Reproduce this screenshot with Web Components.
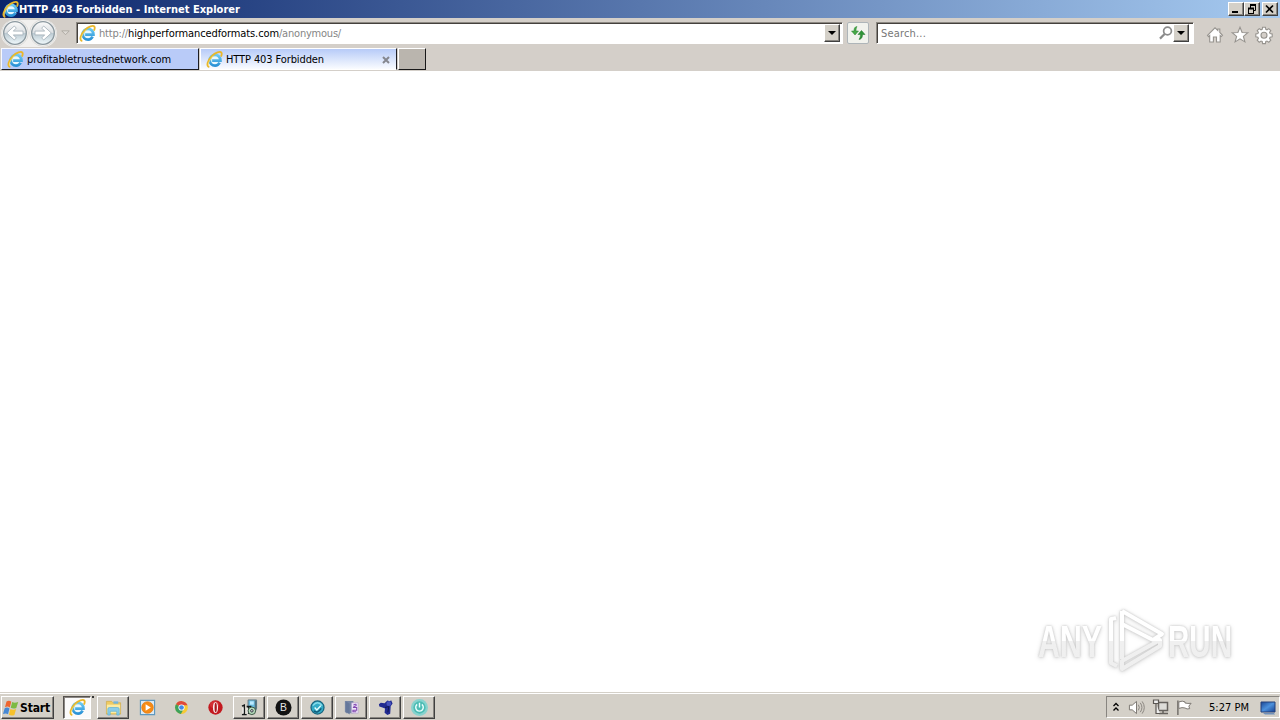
<!DOCTYPE html>
<html lang="en"><head><meta charset="utf-8"><title>HTTP 403 Forbidden - Internet Explorer</title>
<style>html,body{margin:0;height:100%;overflow:hidden;background:#fff}</style></head>
<body><desktop-screen></desktop-screen>
<script>
const ICONS={
ie:['0 0 18 18',`<defs><linearGradient id="a" x2="0" y2="1"><stop stop-color="#6ccaf2"/><stop offset="1" stop-color="#2b92d6"/></linearGradient></defs><circle cx="9.600" cy="9.600" r="6.200" fill="#e9f7fd"/><path d="M14.400 12.400C13.300 14.600 11.600 15.500 9.600 15.500 6.300 15.500 4 13 4 9.800 4 6.600 6.300 4.100 9.600 4.100s5.800 2.600 5.700 6.200H6.500" fill="none" stroke="url(#a)" stroke-width="2.900"/><path d="M3.500 17C-.2 16.300 1.600 9.900 5.900 5.600 10 1.600 15 .1 16.300 1.700c.7.900.3 2.600-.5 4.200" fill="none" stroke="#eab72a" stroke-width="1.900"/><path d="M2.800 15.500C1.800 13 4.500 8.500 8 5" fill="none" stroke="#ffe577" stroke-width=".8"/>`],
back:['0 0 28 28',`<defs><linearGradient id="a" x2="0" y2="1"><stop stop-color="#fbfbfb"/><stop offset=".48" stop-color="#dce0e3"/><stop offset=".52" stop-color="#bccbd3"/><stop offset="1" stop-color="#f0f9fc"/></linearGradient></defs><circle cx="14" cy="14" r="13.300" fill="#f5f5f3" stroke="#dddcda"/><circle cx="14" cy="14" r="11.300" fill="url(#a)" stroke="#8b989f" stroke-width="1.300"/><path d="M5.700 14l7.600-7 2 2.100-3 3H22v3.800h-9.700l3 3-2 2.100z" fill="#fff" stroke="#a2afb7" stroke-width=".8"/>`],
tri:['0 0 10 7',`<path d="M.8 1h8.400L5 5.500z" fill="#dedbd6" stroke="#aaa69f"/>`],
down:['0 0 8 4',`<path d="M0 0h8L4 4z" fill="#000"/>`],
refresh:['0 0 18 16',`<path d="M8 1.500C5.500 1.800 5 3.500 5 6H2.500L6 10l3.500-4H7c0-2 .3-3 1-4.500z" fill="#46a747" stroke="#27852e" stroke-width=".5"/><path d="M10 14.500c2.500-.3 3.500-2 3.500-5H16l-3.500-4L9 9.500h2.500c0 2-.5 3.500-1.500 5z" fill="#2f9438" stroke="#187323" stroke-width=".5"/>`],
search:['0 0 14 14',`<circle cx="8.500" cy="5" r="3.900" fill="#fff" stroke="#8b8b8b" stroke-width="1.700"/><path d="M5.600 8L1 12.600" stroke="#8b8b8b" stroke-width="2.200"/>`],
home:['0 0 18 18',`<path d="M1.500 9.300L9 1.800l2.800 2.700V3h2v3.500l2.700 2.800-1.200 1.300-1.100-1V16h-3.700v-5H7.400v5H3.700V9.600l-1.100 1z" fill="#fff" stroke="#96938e" stroke-width="1.100"/>`],
star:['0 0 18 18',`<path d="M9 1.300l2.100 5.200 5.700.3-4.400 3.600 1.500 5.500L9 12.800l-4.900 3.100 1.500-5.500-4.400-3.600 5.700-.3z" fill="#fff" stroke="#96938e" stroke-width="1.100"/>`],
gear:['0 0 18 18',`<g fill="#fff" stroke="#96938e" stroke-width="1.100"><path d="M7.600 1.200h2.800l.4 2.100 1.200.5 1.800-1.200 2 2-1.200 1.800.5 1.200 2.100.4v2.800l-2.100.4-.5 1.200 1.200 1.800-2 2-1.800-1.200-1.200.5-.4 2.100H7.600l-.4-2.100-1.200-.5-1.800 1.200-2-2 1.200-1.800-.5-1.200L.8 10.800V8l2.100-.4.5-1.200-1.200-1.800 2-2L6 3.800l1.200-.5z"/><circle cx="9" cy="9.300" r="3" fill="#d4cfc9"/></g>`],
min:['0 0 12 10',`<path d="M2 7h6v2H2z"/>`],
restore:['0 0 12 10',`<path d="M4.500 1v3M4 1h6M9.500 1v5.500M7.500 6.500h2M2.500 4v5.500M7.500 4v5.500M2 9.500h6" fill="none" stroke="#000"/><path d="M4 1h6M2 4.500h6" stroke="#000" stroke-width="2"/>`],
close:['0 0 12 10',`<path d="M2 1.500l7 7M9 1.500l-7 7" stroke="#000" stroke-width="1.700"/>`],
x:['0 0 8 8',`<path d="M1 1l6 6M7 1L1 7" stroke="#85878f" stroke-width="2"/>`],
win:['0 0 17 16',`<path d="M3.500 1.500C5.500.3 7 .8 8.300 1.700L6.800 7.500C5.500 6.600 4 6.200 2 7.200z" fill="#ee6630"/><path d="M9.200 2.100c1.700 1 3.500.9 6 0L13.300 8c-2 .9-4 .8-5.600-.2z" fill="#7dba43"/><path d="M1.700 8.200c2-1 3.500-.6 4.800.3L5 14.300C3.700 13.400 2.200 13 0 14z" fill="#4688d4"/><path d="M7.400 8.900c1.600 1 3.500 1.100 5.700.2l-1.700 5.800c-2 .9-3.900.8-5.500-.2z" fill="#f6c12c"/>`],
folder:['0 0 18 18',`<path d="M1.500 4V2.500H7L8.500 4h8v12h-15z" fill="#f0cb61" stroke="#cda946" stroke-width=".7"/><path d="M2 6h14v9H2z" fill="#fceba3"/><path d="M9 2.500h5V5H9z" fill="#73b5db"/><path d="M3 17v-6.500Q3 9 5 9h8q2 0 2 1.500V17h-2.500v-4h-7v4z" fill="#8bcde9" stroke="#5aaed3" stroke-width=".7"/>`],
play:['0 0 18 18',`<path d="M1.500 1.500h15v15h-15z" fill="#dceaf3" stroke="#5d98bf" stroke-width="1.200"/><circle cx="9" cy="9" r="6.200" fill="#f58b16" stroke="#dc710b" stroke-width=".6"/><path d="M7 5.500v7L12.500 9z" fill="#fff"/>`],
chrome:['0 0 16 16',`<circle cx="8" cy="8" r="6.800" fill="#f6ca36"/><path d="M8 8L2.100 4.600A6.800 6.800 0 0 1 14.400 5.700H8z" fill="#df493b"/><path d="M8 8L2.100 4.600A6.800 6.800 0 0 0 7.300 14.800l3.100-5.200z" fill="#3da15b"/><circle cx="8" cy="8" r="3.300" fill="#fff"/><circle cx="8" cy="8" r="2.500" fill="#4389e5"/>`],
opera:['0 0 18 18',`<circle cx="9" cy="9" r="7.600" fill="#c3191f"/><ellipse cx="8" cy="6" rx="5" ry="4" fill="#ec5152" opacity=".4"/><ellipse cx="9" cy="9" rx="2.700" ry="5.900" fill="#f9eeee"/><ellipse cx="9.200" cy="9" rx="1.200" ry="5" fill="#a8191d"/>`],
installer:['0 0 18 18',`<path d="M7.500 1h9v9h-9z" fill="#68bce0" stroke="#607580"/><path d="M9.500 2.500h4v3.500h-4z" fill="#bceaff"/><path d="M14.500 1v11h2V2z" fill="#506f7b"/><path d="M1 7.500l2.500-1V16M1 16.500h5M6 8h5M8 8v8" fill="none" stroke="#15191a" stroke-width="1.500"/><path d="M2.200 9v6M6.500 9.500v6" stroke="#fff"/><circle cx="11.500" cy="12.500" r="4" fill="#b8ddbd" stroke="#344f3e"/><circle cx="11.500" cy="12.500" r="1.300" fill="#fff" stroke="#223"/>`],
b:['0 0 18 18',`<circle cx="9" cy="9" r="8.500" fill="#121212"/><text x="9" y="12.900" text-anchor="middle" font-family="Liberation Sans,sans-serif" font-size="11" fill="#e5e5e5">B</text>`],
check:['0 0 18 18',`<circle cx="9" cy="9" r="6.900" fill="#33abc6" stroke="#17647e" stroke-width="1.300"/><path d="M4 7q5-6 10 0" fill="none" stroke="#86dceb" stroke-width="1.500"/><path d="M6 9l2.300 2.500L12.500 7" fill="none" stroke="#e6ffff" stroke-width="1.500"/><path d="M5 12.500q4 3.500 8-2.500" fill="none" stroke="#125876" stroke-width="1.500"/>`],
book:['0 0 18 18',`<path d="M2 2h9v13H3.500L2 13.500z" fill="#7787a5"/><path d="M3 2.500v10.500l4 3.500V5z" fill="#65789b"/><path d="M9 4h7v11H9z" fill="#eee6f7" stroke="#b19bc9" stroke-width=".6"/><path d="M11 6.500q3-2 3 0c0 1.500-3 1-3 2.500h3.500v3h-4v1.500H14" fill="none" stroke="#8147b0" stroke-width="1.100"/>`],
scope:['0 0 18 18',`<path d="M2 5.500L4 4l4 .5 3-3 2.500.8 1.500-1 1.500 3.500-2 3-.5 7.700-3 1.500-3-2.500.5-4.500L5 8.800 2.500 8z" fill="#202a91"/><circle cx="12.500" cy="5" r="2.500" fill="#4653bd"/><path d="M8.500 9l4-1-1 6" fill="none" stroke="#10164f"/>`],
power:['0 0 18 18',`<circle cx="9" cy="9" r="9" fill="#87d3ce"/><circle cx="9" cy="9" r="6.500" fill="#4dbcb4"/><path d="M6.500 5.700a4 4 0 1 0 5 0M9 4v5" fill="none" stroke="#ecffff" stroke-width="1.500"/>`],
chev:['0 0 6 10',`<path d="M.5 4L3 1.500 5.500 4M.5 8.500L3 6l2.500 2.500" fill="none" stroke="#000" stroke-width="1.300"/>`],
sound:['0 0 18 16',`<path d="M1.500 5.500h3L9 1.500v13l-4.500-4h-3z" fill="#fff" stroke="#77736e"/><path d="M11 5q2 3 0 6M13 3q3.500 5 0 10M15 1.500q4.500 6.500 0 13" fill="none" stroke="#85817c"/>`],
net:['0 0 18 18',`<path d="M6.500 4.500h9v8h-9z" fill="#deddd9" stroke="#66625e" stroke-width="1.500"/><path d="M7 15.500h9M11 13v2" stroke="#66625e" stroke-width="1.500"/><path d="M1.500 2v3.500h5V2zM4 5.500v10h4" fill="#eee" stroke="#5b5753" stroke-width="1.200"/>`],
flag:['0 0 18 16',`<path d="M2 .5V16" stroke="#68645f" stroke-width="1.400"/><path d="M3 2q4-1.500 6.500 0v1.200q3 .8 6.500.3l-2.400 3 .9 2.700q-3 1-5-.7-3-1-6.500.5z" fill="#fff" stroke="#77736e"/>`],
desk:['0 0 18 18',`<defs><linearGradient id="a" x2="1" y2="1"><stop stop-color="#194694"/><stop offset=".5" stop-color="#4c91dc"/><stop offset="1" stop-color="#163f91"/></linearGradient></defs><path d="M2 3h14v10H2z" fill="url(#a)" stroke="#24417b"/><path d="M4 14h11l1 1.500H6z" fill="#6f90b9"/>`]
};
class UiIcon extends HTMLElement{connectedCallback(){const i=ICONS[this.getAttribute('name')],w=this.getAttribute('w')||16,h=this.getAttribute('h')||w;
this.attachShadow({mode:'open'}).innerHTML=`<style>:host{display:block;flex:none;width:${w}px;height:${h}px}svg{display:block;width:100%;height:100%;overflow:visible}</style><svg viewBox="${i[0]}" preserveAspectRatio="none">${i[1]}</svg>`}}
customElements.define('ui-icon',UiIcon);
class FitText extends HTMLElement{connectedCallback(){const s=this.attachShadow({mode:'open'}),w=+this.getAttribute('w');
s.innerHTML=`<style>:host{display:block;flex:none;width:${w}px;height:14px;line-height:14px;white-space:pre}span{display:inline-block;white-space:pre}</style><span><slot></slot></span>`;
const e=s.querySelector('span');e.style.letterSpacing=(w-e.getBoundingClientRect().width)/this.textContent.length+'px'}}
customElements.define('fit-text',FitText);
class RaisedButton extends HTMLElement{connectedCallback(){const a=n=>this.getAttribute(n);
this.attachShadow({mode:'open'}).innerHTML=`<style>:host{box-sizing:border-box;display:flex;flex:none;align-items:center;justify-content:center;width:${a('w')}px;height:${a('h')}px;background:#d4d0c8;border:1px solid;border-color:#fff #404040 #404040 #fff;box-shadow:inset -1px -1px #888580}:host([pressed]){background:#fbfafa;border-color:#55514d #fff #fff #55514d;box-shadow:inset 1px 1px #8b8783}:host([flat]){background:none;border-color:transparent;box-shadow:none}</style><slot></slot>`}}
customElements.define('raised-button',RaisedButton);
class TitleBar extends HTMLElement{connectedCallback(){this.attachShadow({mode:'open'}).innerHTML=`<style>:host{display:flex;box-sizing:border-box;height:18px;padding:0 2px 0 2px;align-items:center;background:linear-gradient(90deg,#0a246a,#a6caf0);color:#fff;font-weight:bold}fit-text{margin:1px 0 0 0}.g{flex:1}raised-button+raised-button+raised-button{margin-left:2px}</style><ui-icon name="ie" w="17"></ui-icon><fit-text w="221">HTTP 403 Forbidden - Internet Explorer</fit-text><span class="g"></span><raised-button w="16" h="14"><ui-icon name="min" w="12" h="10"></ui-icon></raised-button><raised-button w="16" h="14"><ui-icon name="restore" w="12" h="10"></ui-icon></raised-button><raised-button w="16" h="14"><ui-icon name="close" w="12" h="10"></ui-icon></raised-button>`}}
customElements.define('title-bar',TitleBar);
class NavBar extends HTMLElement{connectedCallback(){this.attachShadow({mode:'open'}).innerHTML=`<style>:host{display:flex;box-sizing:border-box;height:30px;align-items:center;padding:0 6px 0 1px;background:#d4cfc9}
.f{box-sizing:border-box;display:flex;height:22px;align-items:center;background:#fff;border:1px solid;border-color:#8c8882 #fff #fff #8c8882;box-shadow:inset 1px 1px #45413d}.url{width:767px;margin-left:6px;padding:0 2px 0 2px;color:#858585}.url b{font-weight:normal;color:#000}.s{width:318px;margin-left:7px;padding:0 4px 0 4px;color:#777}.g{flex:1}.n{display:flex;background:#f1f0ee;border-radius:14px;height:27px;align-items:center}.n ui-icon+ui-icon{transform:scaleX(-1)}.tri{margin-left:4px}.r{box-sizing:border-box;width:22px;height:22px;margin-left:4px;display:grid;place-items:center;background:#f1f2ed;border:1px solid #aeb5b9;border-radius:2px}.tools{display:flex;gap:6.500px;margin:3px 0 0 12px}.url>ui-icon{margin-right:3px}fit-text{margin-top:2px}
</style><div class="n"><ui-icon name="back" w="28"></ui-icon><ui-icon name="back" w="28"></ui-icon></div><ui-icon class="tri" name="tri" w="9" h="6"></ui-icon>
<div class="f url"><ui-icon name="ie" w="17"></ui-icon><fit-text w="29">http://</fit-text><b><fit-text w="151">highperformancedformats.com</fit-text></b><fit-text w="62">/anonymous/</fit-text><span class="g"></span><raised-button w="16" h="18"><ui-icon name="down" w="8" h="4"></ui-icon></raised-button></div>
<div class="r"><ui-icon name="refresh" w="18" h="16"></ui-icon></div><div class="f s"><fit-text w="45">Search...</fit-text><span class="g"></span><ui-icon name="search" w="14"></ui-icon><raised-button w="16" h="18"><ui-icon name="down" w="8" h="4"></ui-icon></raised-button></div>
<div class="tools"><ui-icon name="home" w="18"></ui-icon><ui-icon name="star" w="18"></ui-icon><ui-icon name="gear" w="18"></ui-icon></div>`}}
customElements.define('nav-bar',NavBar);
class TabStrip extends HTMLElement{connectedCallback(){this.attachShadow({mode:'open'}).innerHTML=`<style>:host{display:flex;box-sizing:border-box;height:23px;padding:0 0 1px 1px;background:#d4cfc9}.t{box-sizing:border-box;display:flex;align-items:center;width:198px;height:22px;padding:1px 6px 0 5px;background:#b9cbf8;border:1px solid;border-color:#f7f9ff #1c1c22 #1c1c22 #f7f9ff}.t+.t{width:197px;background:linear-gradient(#b7cbf8,#fafcff);border-color:#fff #1c1c22 #fff #fff;margin-left:1px;}.t fit-text{margin:1px 0 0 3px}.g{flex:1}.new{box-sizing:border-box;width:28px;height:22px;margin-left:1px;background:#bab5ae;border:1px solid;border-color:#fff #181818 #181818 #fff}</style><div class="t"><ui-icon name="ie" w="17"></ui-icon><fit-text w="144">profitabletrustednetwork.com</fit-text></div><div class="t"><ui-icon name="ie" w="17"></ui-icon><fit-text w="98">HTTP 403 Forbidden</fit-text><span class="g"></span><ui-icon name="x" w="8"></ui-icon></div><div class="new"></div>`}}
customElements.define('tab-strip',TabStrip);
class WaterMark extends HTMLElement{connectedCallback(){this.attachShadow({mode:'open'}).innerHTML=`<style>:host{display:block;width:220px;height:80px}svg{display:block;overflow:visible;filter:drop-shadow(0 0 1px #c4c4c4) drop-shadow(0 1px 2px #ddd)}text{font:bold 44px "Liberation Sans",sans-serif;fill:url(#f)}</style><svg width="220" height="80"><defs><linearGradient id="f" gradientUnits="userSpaceOnUse" x1="0" x2="0" y1="10" y2="70"><stop stop-color="#fff"/><stop offset=".51" stop-color="#fff"/><stop offset=".52" stop-color="#f0f0f0"/><stop offset="1" stop-color="#efefef"/></linearGradient></defs><text x="13" y="57" textLength="64" lengthAdjust="spacingAndGlyphs">ANY</text><text x="143" y="57" textLength="64" lengthAdjust="spacingAndGlyphs">RUN</text><path d="M91 18l-5 1v44l6 3M97 11v48M97 11l40 23-9 6-31-16M135 40L97 61v8l38-23z" fill="none" stroke="url(#f)" stroke-width="4" stroke-linejoin="round"/></svg>`}}
customElements.define('water-mark',WaterMark);
class TaskBar extends HTMLElement{connectedCallback(){const names=['ie','folder','play','chrome','opera','installer','b','check','book','scope','power'];
const items=names.map((n,i)=>`<raised-button w="32" h="23" ${i===0?'pressed':i>1&&i<5?'flat':''}><ui-icon name="${n}" w="${n==='chrome'?15:17}"></ui-icon>${i===0?'<i class="mark"></i>':''}</raised-button>`).join('');
this.attachShadow({mode:'open'}).innerHTML=`<style>:host{display:flex;box-sizing:border-box;height:28px;padding:3px 0 1px 1px;background:#d4d0c8;border-top:1px solid #d4d0c8;box-shadow:inset 0 1px #fff;align-items:flex-start}b{font-size:12px}.apps{display:flex;gap:2px;margin-left:9px}.apps raised-button:first-child{width:28px;margin-right:4px;position:relative;}.g{flex:1}.tray{box-sizing:border-box;display:flex;align-items:center;width:174px;height:22px;border:1px solid;border-color:#888580 #fff #fff #888580;padding:0 2px 0 6px}.tray>:nth-child(2){margin-left:9px}.tray>:nth-child(3){margin-left:7px}.tray>:nth-child(4){margin-left:6px}fit-text{color:#000}.clock{margin:1px 0 0 16px}.desk{margin:1px 0 0 10px}.mark{position:absolute;left:28px;top:-1px;width:2px;height:2px;background:#333}.start{padding-right:2px}</style><raised-button class="start" w="53" h="23"><ui-icon name="win" w="17" h="16"></ui-icon><b><fit-text w="30">Start</fit-text></b></raised-button><div class="apps">${items}</div><span class="g"></span><div class="tray"><ui-icon name="chev" w="6" h="10"></ui-icon><ui-icon name="sound" w="17" h="15"></ui-icon><ui-icon name="net" w="18"></ui-icon><ui-icon name="flag" w="17" h="15"></ui-icon><fit-text class="clock" w="40">5:27 PM</fit-text><ui-icon class="desk" name="desk" w="18"></ui-icon></div>`}}
customElements.define('task-bar',TaskBar);
class DesktopScreen extends HTMLElement{connectedCallback(){this.attachShadow({mode:'open'}).innerHTML=`<style>:host{display:grid;width:1280px;height:720px;grid-template-rows:18px 30px 23px 1fr 28px;overflow:hidden;font:11px "DejaVu Sans Condensed","DejaVu Sans",sans-serif;color:#000}main{background:#fff;position:relative}water-mark{position:absolute;right:35px;bottom:12px}</style><title-bar></title-bar><nav-bar></nav-bar><tab-strip></tab-strip><main><water-mark></water-mark></main><task-bar></task-bar>`}}
customElements.define('desktop-screen',DesktopScreen);
</script></body></html>
